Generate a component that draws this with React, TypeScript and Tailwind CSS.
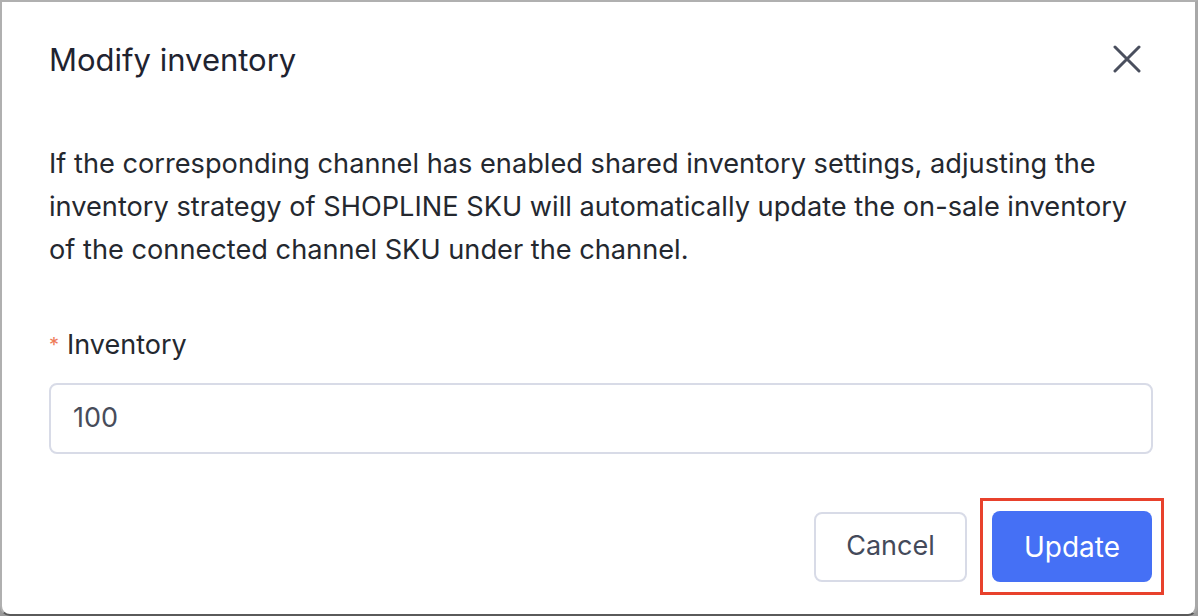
export default function App() {
  return (
    <div className="w-[1198px] h-[616px] bg-[#9a9a9a] font-['Inter',sans-serif]">
      <div className="w-full h-full bg-white border-t-2 border-l-2 border-r-[3px] border-b-2 border-t-[#b0b0b0] border-l-[#b0b0b0] border-r-[#a8a8a8] border-b-[#5a5a5a] rounded-b-[10px] flex flex-col">
        <div className="h-[116px] flex items-center justify-between pl-[47px] pr-[54px]">
          <h1 className="text-[31px] leading-[40px] text-[#1f2330]">
            Modify inventory
          </h1>
          <button className="text-[#4a4f5e] mb-[2px]">
            <svg width="28" height="28" viewBox="0 0 28 28" fill="none" stroke="currentColor" strokeWidth="3" strokeLinecap="round">
              <path d="M2 2L26 26M26 2L2 26" />
            </svg>
          </button>
        </div>
        <div className="pl-[47px] pr-[52px]">
          <p className="mt-[24px] text-[27.2px] leading-[43px] text-[#24282f]">
            If the corresponding channel has enabled shared inventory settings, adjusting the
            inventory strategy of SHOPLINE SKU will automatically update the on-sale inventory
            of the connected channel SKU under the channel.
          </p>
          <div className="mt-[56px] flex items-center h-[36px] text-[27px] text-[#24282f]">
            <span className="text-[#ee7a58] text-[20px] mr-[8px]">*</span>
            <span>Inventory</span>
          </div>
          <div className="mt-[20px] h-[71px] w-[1104px] border-2 border-[#d8dbe7] rounded-[8px] flex items-center px-[22px] text-[27px] text-[#474c5a]">
            100
          </div>
          <div className="mt-[57px] flex justify-end items-center gap-[25px] mr-[-9px]">
            <button className="h-[70px] w-[153px] border-2 border-[#d8dbe7] rounded-[8px] text-[27px] text-[#444a5a] bg-white">
              Cancel
            </button>
            <div className="relative">
              <button className="h-[71px] w-[160px] rounded-[8px] bg-[#4570f5] text-white text-[28px]">
                Update
              </button>
              <div className="absolute -left-[12px] -top-[13px] -right-[12px] -bottom-[13px] border-[3px] border-[#e8412c]" />
            </div>
          </div>
        </div>
      </div>
    </div>
  );
}
